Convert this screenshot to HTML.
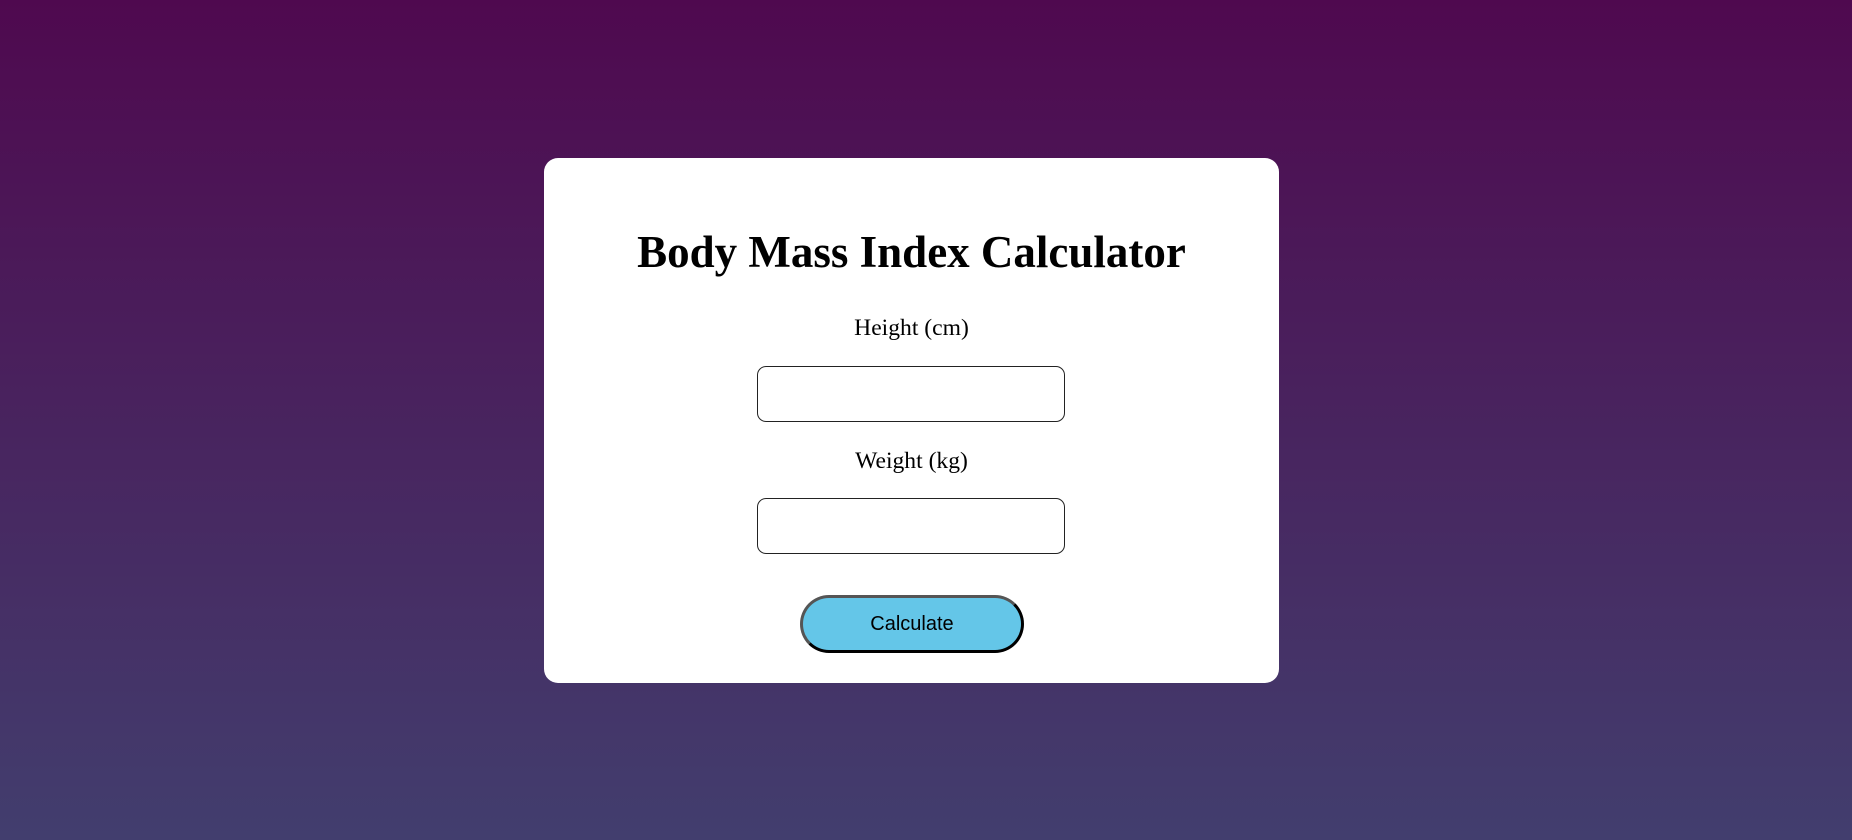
<!DOCTYPE html>
<html><head><meta charset="utf-8"><style>
html,body{margin:0;padding:0;width:1852px;height:840px;overflow:hidden}
body{background:linear-gradient(#4f094f,#423e6e);font-family:"Liberation Serif",serif;position:relative}
.card{position:absolute;left:544px;top:158px;width:735px;height:525px;background:#fff;border-radius:14px}
h1{position:absolute;left:544px;width:735px;top:222px;margin:0;text-align:center;font-size:45px;font-weight:bold;line-height:60px;color:#000}
.lab{position:absolute;left:544px;width:735px;text-align:center;font-size:23.6px;line-height:30px;color:#000}
.inp{position:absolute;left:757px;width:306px;height:54px;border:1px solid #222;border-radius:9px;background:#fff}
.btn{position:absolute;left:800px;top:595px;width:218px;height:52px;border:3px solid;border-color:#555 #000 #000 #555;border-radius:30px;background:#64c6e8;font-family:"Liberation Sans",sans-serif;font-size:20px;text-align:center;line-height:52px;color:#000}
</style></head><body>
<div class="card"></div>
<h1>Body Mass Index Calculator</h1>
<div class="lab" style="top:313px">Height (cm)</div>
<div class="inp" style="top:366px"></div>
<div class="lab" style="top:446px">Weight (kg)</div>
<div class="inp" style="top:498px"></div>
<div class="btn">Calculate</div>
</body></html>
